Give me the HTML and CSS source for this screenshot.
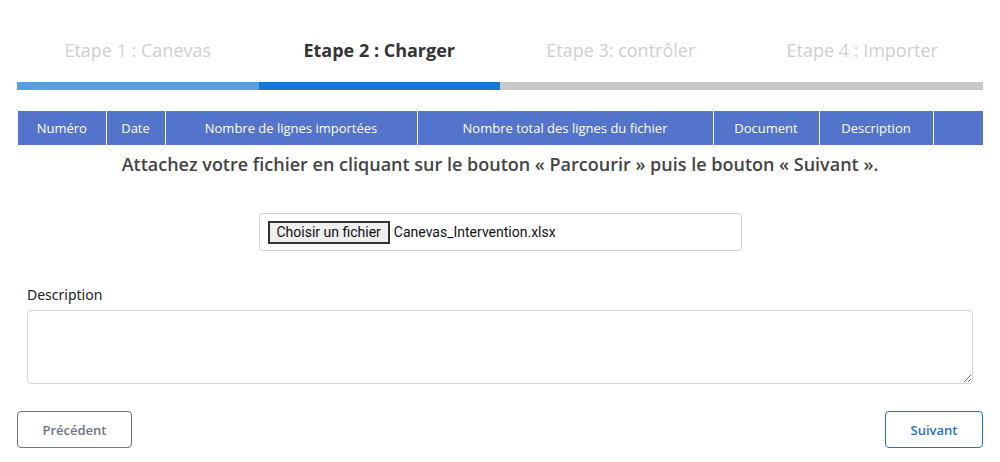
FILE: index.html
```html
<!DOCTYPE html>
<html lang="fr">
<head>
    <meta charset="UTF-8">
    <meta name="viewport" content="width=device-width, initial-scale=1.0">
    <title>Import - Charger</title>
    <link rel="stylesheet" href="styles.css">
</head>
<body>
    <div class="wizard">
        <!-- Etapes -->
        <div class="steps">
            <div class="step done">Etape 1 : Canevas</div>
            <div class="step active">Etape 2 : Charger</div>
            <div class="step">Etape 3: contrôler</div>
            <div class="step">Etape 4 : Importer</div>
        </div>
        <div class="progress">
            <div class="progress-seg seg-done"></div>
            <div class="progress-seg seg-active"></div>
            <div class="progress-rest"></div>
        </div>

        <table class="history">
            <thead>
                <tr>
                    <th class="col-num">Numéro</th>
                    <th class="col-date">Date</th>
                    <th class="col-imp">Nombre de lignes importées</th>
                    <th class="col-total">Nombre total des lignes du fichier</th>
                    <th class="col-doc">Document</th>
                    <th class="col-desc">Description</th>
                    <th class="col-act"></th>
                </tr>
            </thead>
        </table>

        <p class="hint">Attachez votre fichier en cliquant sur le bouton « Parcourir » puis le bouton « Suivant ».</p>

        <div class="file-box">
            <label class="file-btn" for="fichier">Choisir un fichier</label>
            <span class="file-name">Canevas_Intervention.xlsx</span>
            <input type="file" id="fichier" class="file-input">
        </div>

        <div class="form-group">
            <label class="form-label" for="description">Description</label>
            <textarea id="description" class="form-control"></textarea>
        </div>

        <div class="actions">
            <button class="btn btn-prev">Précédent</button>
            <button class="btn btn-next">Suivant</button>
        </div>
    </div>
</body>
</html>
```

FILE: styles.css
```css
* {
    margin: 0;
    padding: 0;
    box-sizing: border-box;
}

body {
    font-family: "Open Sans", "Noto Sans", sans-serif;
    background: #fff;
    color: #333;
}

.wizard {
    padding: 0 17px;
}

/* Etapes */
.steps {
    display: grid;
    grid-template-columns: repeat(4, 1fr);
    padding-top: 38px;
}

.step {
    text-align: center;
    font-size: 18px;
    line-height: 24px;
    color: #cfcfcf;
}

.step.active {
    color: #333;
    font-weight: 700;
}

.progress {
    display: flex;
    height: 8px;
    margin-top: 20px;
}

.progress-seg {
    width: 25%;
}

.seg-done {
    background: #57a0e5;
}

.seg-active {
    background: #1976d2;
}

.progress-rest {
    flex: 1;
    background: #c8c8c8;
}

/* Tableau */
.history {
    width: calc(100% - 1px);
    margin: 21px 0 0 1px;
    border-collapse: collapse;
    table-layout: fixed;
}

.history th {
    background: #5473ca;
    color: #fff;
    font-weight: 400;
    font-size: 13px;
    height: 34px;
    text-align: center;
    border-left: 1px solid #fff;
}

.history th:first-child {
    border-left: none;
}

.col-num { width: 88px; }
.col-date { width: 59px; }
.col-imp { width: 252px; }
.col-total { width: 296px; }
.col-doc { width: 106px; }
.col-desc { width: 114px; }

.hint {
    text-align: center;
    font-size: 18px;
    font-weight: 600;
    line-height: 24px;
    color: #444;
    margin-top: 7px;
}

/* Fichier */
.file-box {
    width: 483px;
    height: 38px;
    margin: 37px auto 0;
    border: 1px solid #ccd1d9;
    border-radius: 4px;
    display: flex;
    align-items: center;
    padding-left: 8px;
    font-family: Roboto, sans-serif;
    font-size: 14px;
    color: #111;
}

.file-btn {
    background: #efefef;
    border: 2px solid #333;
    padding: 0 7px;
    height: 23px;
    line-height: 19px;
    margin-right: 4px;
    cursor: pointer;
}

.file-input {
    display: none;
}

/* Description */
.form-group {
    padding: 0 10px;
    margin-top: 34px;
}

.form-label {
    display: block;
    font-family: "Noto Sans", "Open Sans", sans-serif;
    font-size: 14px;
    line-height: 20px;
    color: #222;
}

.form-control {
    display: block;
    width: 100%;
    height: 74px;
    margin-top: 5px;
    border: 1px solid #d6d6d6;
    border-radius: 4px;
    font-family: inherit;
    resize: vertical;
}

/* Boutons */
.actions {
    display: flex;
    justify-content: space-between;
    margin-top: 27px;
}

.btn {
    height: 37px;
    background: #fff;
    border-radius: 4px;
    font-family: "Open Sans", sans-serif;
    font-size: 13px;
    font-weight: 600;
    cursor: pointer;
}

.btn-prev {
    width: 115px;
    border: 1px solid #6c757d;
    color: #6c757d;
}

.btn-next {
    width: 98px;
    border: 1px solid #1a73d0;
    color: #1a73d0;
}
```
